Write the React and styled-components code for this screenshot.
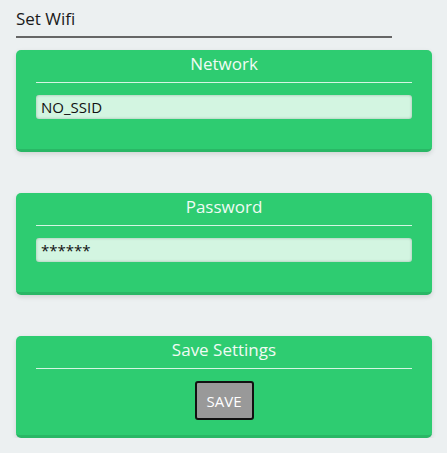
import React from "react";
import styled, { createGlobalStyle } from "styled-components";

const Global = createGlobalStyle`
  html, body { margin: 0; padding: 0; background: #ecf0f1; }
  body { font-family: "Open Sans", "DejaVu Sans", sans-serif; }
  * { box-sizing: border-box; }
`;

const Page = styled.div`
  padding: 7px 15px 0 16px;
  display: flex;
  flex-direction: column;
`;

const Heading = styled.h2`
  margin: 0 0 12px 0;
  width: 376px;
  font-size: 17px;
  font-weight: 400;
  line-height: 23px;
  color: #1a1a1a;
  padding-bottom: 6px;
  border-bottom: 2px solid #666;
`;

const Cards = styled.div`
  display: flex;
  flex-direction: column;
  gap: 41px;
`;

const Card = styled.section`
  height: 102px;
  background: #2ecc71;
  border-radius: 5px;
  border-bottom: 3px solid #29b765;
  box-shadow: 0 2px 5px rgba(0, 0, 0, 0.12);
  padding: 0 20px;
  display: flex;
  flex-direction: column;
  align-items: ${(p) => (p.$center ? "center" : "stretch")};
`;

const Title = styled.div`
  align-self: stretch;
  text-align: center;
  font-size: 17px;
  line-height: 27px;
  padding-bottom: 5px;
  color: #f0fbf4;
  border-bottom: 1px solid #d5f5e3;
`;

const Input = styled.input`
  margin-top: 12px;
  height: 24px;
  width: 100%;
  border: none;
  border-radius: 3px;
  background: #d3f5e1;
  box-shadow: inset 0 0 3px rgba(0, 0, 0, 0.25);
  padding: 0 5px;
  font-family: "Open Sans", "DejaVu Sans", sans-serif;
  font-size: 15px;
  color: #111;
  outline: none;
`;

const Button = styled.button`
  margin-top: 12px;
  height: 39px;
  padding: 0 10px;
  background: #999;
  border: 2px solid #111;
  border-radius: 3px;
  color: #fff;
  font-family: "Open Sans", "DejaVu Sans", sans-serif;
  font-size: 15px;
  cursor: pointer;
`;

export default function App() {
  return (
    <>
      <Global />
      <Page>
        <Heading>Set Wifi</Heading>
        <Cards>
          <Card>
            <Title>Network</Title>
            <Input type="text" defaultValue="NO_SSID" />
          </Card>
          <Card>
            <Title>Password</Title>
            <Input type="text" defaultValue="******" />
          </Card>
          <Card $center>
            <Title>Save Settings</Title>
            <Button>SAVE</Button>
          </Card>
        </Cards>
      </Page>
    </>
  );
}
